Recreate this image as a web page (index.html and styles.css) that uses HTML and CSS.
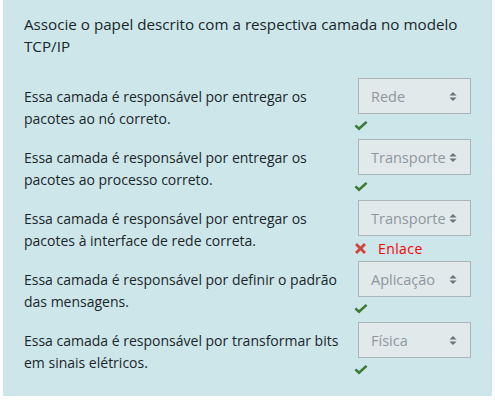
FILE: index.html
```html
<!DOCTYPE html>
<html lang="pt">
<head>
<meta charset="utf-8">
<link rel="stylesheet" href="styles.css">
</head>
<body>
<div class="formulation">
  <p class="qtext">Associe o papel descrito com a respectiva camada no modelo TCP/IP</p>
  <div class="answers">
    <div class="row">
      <div class="text">Essa camada é responsável por entregar os pacotes ao nó correto.</div>
      <div class="control">
        <div class="select"><span>Rede</span><svg class="arrows" viewBox="0 0 8 10"><path d="M4 0 L8 4 H0Z M0 6 H8 L4 10Z"/></svg></div>
        <div class="fb"><svg class="ok" viewBox="0 0 14 10"><path d="M0.5 5.2 L2.3 3.5 L5 6 L11.7 0 L13.5 1.8 L5 9.5Z"/></svg></div>
      </div>
    </div>
    <div class="row">
      <div class="text">Essa camada é responsável por entregar os pacotes ao processo correto.</div>
      <div class="control">
        <div class="select"><span>Transporte</span><svg class="arrows" viewBox="0 0 8 10"><path d="M4 0 L8 4 H0Z M0 6 H8 L4 10Z"/></svg></div>
        <div class="fb"><svg class="ok" viewBox="0 0 14 10"><path d="M0.5 5.2 L2.3 3.5 L5 6 L11.7 0 L13.5 1.8 L5 9.5Z"/></svg></div>
      </div>
    </div>
    <div class="row">
      <div class="text">Essa camada é responsável por entregar os pacotes à interface de rede correta.</div>
      <div class="control">
        <div class="select"><span>Transporte</span><svg class="arrows" viewBox="0 0 8 10"><path d="M4 0 L8 4 H0Z M0 6 H8 L4 10Z"/></svg></div>
        <div class="fb"><svg class="bad" viewBox="0 0 12 12"><path d="M0 2.2 L2.2 0 L6 3.8 L9.8 0 L12 2.2 L8.2 6 L12 9.8 L9.8 12 L6 8.2 L2.2 12 L0 9.8 L3.8 6Z"/></svg><span class="right">Enlace</span></div>
      </div>
    </div>
    <div class="row">
      <div class="text">Essa camada é responsável por definir o padrão das mensagens.</div>
      <div class="control">
        <div class="select"><span>Aplicação</span><svg class="arrows" viewBox="0 0 8 10"><path d="M4 0 L8 4 H0Z M0 6 H8 L4 10Z"/></svg></div>
        <div class="fb"><svg class="ok" viewBox="0 0 14 10"><path d="M0.5 5.2 L2.3 3.5 L5 6 L11.7 0 L13.5 1.8 L5 9.5Z"/></svg></div>
      </div>
    </div>
    <div class="row">
      <div class="text">Essa camada é responsável por transformar bits em sinais elétricos.</div>
      <div class="control">
        <div class="select"><span>Física</span><svg class="arrows" viewBox="0 0 8 10"><path d="M4 0 L8 4 H0Z M0 6 H8 L4 10Z"/></svg></div>
        <div class="fb"><svg class="ok" viewBox="0 0 14 10"><path d="M0.5 5.2 L2.3 3.5 L5 6 L11.7 0 L13.5 1.8 L5 9.5Z"/></svg></div>
      </div>
    </div>
  </div>
</div>
</body>
</html>
```
FILE: styles.css
```css
html, body {
  margin: 0;
  padding: 0;
  background: #ffffff;
}
body {
  font-family: "Open Sans", "Noto Sans", sans-serif;
  font-size: 14px;
  color: #1a2629;
  padding: 0 3px;
}
.formulation {
  background: #cde6ea;
  padding: 13px 21px 13px 21px;
  width: 447px;
}
.qtext {
  margin: 0;
  line-height: 22px;
  width: 440px;
  font-size: 15.2px;
}
.answers {
  margin-top: 21px;
  display: flex;
  flex-direction: column;
}
.row {
  display: flex;
  height: 61px;
}
.text {
  width: 320px;
  padding-top: 8px;
  line-height: 22px;
}
.control {
  margin-left: 14px;
  display: flex;
  flex-direction: column;
}
.select {
  box-sizing: border-box;
  width: 113px;
  height: 36px;
  border: 1px solid #a9b5b9;
  background: #e1e9eb;
  color: #8f979d;
  display: flex;
  align-items: center;
  justify-content: space-between;
  padding: 0 13px 0 12px;
  font-size: 14.5px;
  white-space: nowrap;
}
.arrows {
  width: 8px;
  height: 9px;
  fill: #6a7378;
  flex: none;
}
.fb {
  height: 25px;
  display: flex;
  align-items: center;
  margin-left: -4px;
}
.ok {
  width: 14px;
  height: 10px;
  fill: #3d7b34;
  margin-top: -2px;
}
.bad {
  width: 11px;
  height: 11px;
  fill: #d0473a;
  margin-left: 1px;
}
.right {
  color: #ff0000;
  margin-left: 12px;
  font-size: 14px;
  letter-spacing: 0.4px;
}
```
